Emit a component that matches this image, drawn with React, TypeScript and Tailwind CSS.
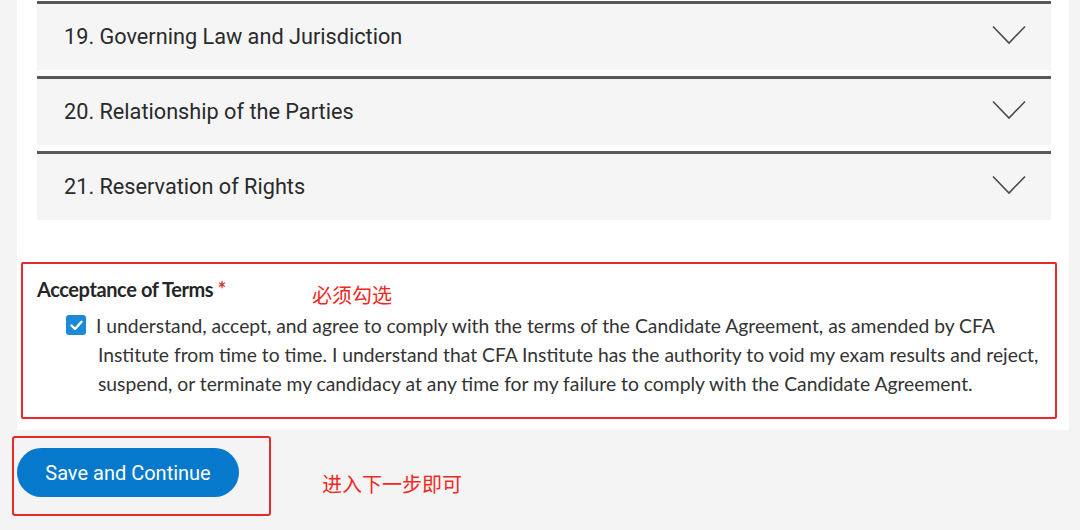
const sections = [
  "19. Governing Law and Jurisdiction",
  "20. Relationship of the Parties",
  "21. Reservation of Rights",
];

function Chevron() {
  return (
    <svg width="34" height="20" viewBox="0 0 34 20" fill="none" className="mb-[5px]">
      <path d="M1 1.5 L17 18 L33 1.5" stroke="#4a4a4a" strokeWidth="1.6" />
    </svg>
  );
}

export default function App() {
  return (
    <div className="min-h-[530px] bg-[#f4f4f5] font-['Lato','Liberation_Sans',sans-serif]">
      {/* White content panel */}
      <div className="ml-[17px] w-[1052px] bg-white pt-px pb-[11px]">
        <div className="ml-[20px] mr-[18px] flex flex-col gap-[6px]">
          {sections.map((title) => (
            <div
              key={title}
              className="flex h-[69px] items-center justify-between border-t-[3px] border-[#58595b] bg-[#f5f5f6] pl-[27px] pr-[25px]"
            >
              <span className="font-['Roboto',sans-serif] text-[21.7px] text-[#2a2a2a]">{title}</span>
              <Chevron />
            </div>
          ))}
        </div>

        {/* Acceptance of terms */}
        <div className="relative ml-[4px] mt-[42px] w-[1036px] rounded-[2px] border-2 border-[#e8292b] pl-[14px] pt-[13px] pb-[19px]">
          <div className="text-[20px] leading-[24px] font-bold tracking-[-0.4px] text-[#262626]">
            Acceptance of Terms <span className="text-[#d0342c]">*</span>
          </div>
          <span className="absolute left-[289px] top-[17px] font-['Noto_Sans_CJK_SC',sans-serif] text-[20px] leading-[28px] text-[#f0281e]">
            必须勾选
          </span>
          <div className="mt-[10px] flex items-start pl-[29px]">
            <div className="mt-[4px] flex h-[20px] w-[20px] shrink-0 items-center justify-center rounded-[3px] bg-[#1c8ad6]">
              <svg width="13" height="11" viewBox="0 0 13 11" fill="none">
                <path d="M1.5 5.5 L5 9 L11.5 1.8" stroke="white" strokeWidth="2.4" strokeLinecap="round" strokeLinejoin="round" />
              </svg>
            </div>
            <p className="ml-[10px] whitespace-nowrap text-[19.3px] leading-[29px] text-[#333]">
              I understand, accept, and agree to comply with the terms of the Candidate Agreement, as amended by CFA
              <br />
              <span className="pl-[2px]">
                Institute from time to time. I understand that CFA Institute has the authority to void my exam results and reject,
              </span>
              <br />
              <span className="pl-[2px]">
                suspend, or terminate my candidacy at any time for my failure to comply with the Candidate Agreement.
              </span>
            </p>
          </div>
        </div>
      </div>

      {/* Footer actions */}
      <div className="flex items-start pl-[12px] pt-[6px]">
        <div className="flex h-[80px] w-[259px] items-start rounded-[3px] border-2 border-[#e8292b] pl-[3px] pt-[10px]">
          <button className="h-[49px] w-[222px] rounded-full bg-[#0679cd] font-['Roboto',sans-serif] text-[20px] text-white">
            Save and Continue
          </button>
        </div>
        <span className="ml-[51px] mt-[33px] font-['Noto_Sans_CJK_SC',sans-serif] text-[20px] text-[#f0281e]">
          进入下一步即可
        </span>
      </div>
    </div>
  );
}
